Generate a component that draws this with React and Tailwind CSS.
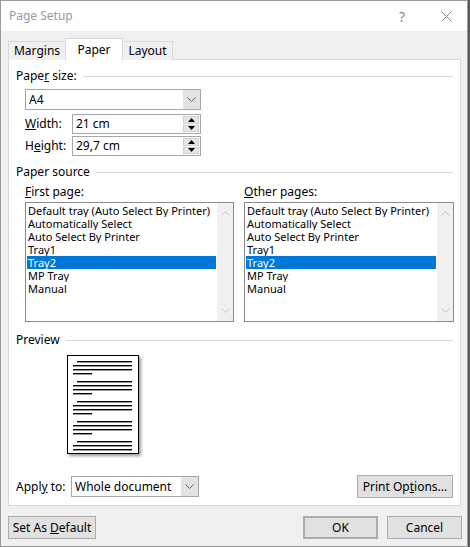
import { Fragment } from 'react';

const BANDEJAS = [
  'Default tray (Auto Select By Printer)',
  'Automatically Select',
  'Auto Select By Printer',
  'Tray1',
  'Tray2',
  'MP Tray',
  'Manual',
];

function Encabezado({ children, className = '' }) {
  return (
    <div className={`flex h-[16px] items-center leading-[16px] ${className}`}>
      <span>{children}</span>
      <div className="ml-[6px] h-px flex-1 bg-[#dcdcdc]" />
    </div>
  );
}

function Chevron({ up = false, color = '#606060' }) {
  return (
    <svg width="9" height="5" viewBox="0 0 9 5">
      <path d={up ? 'M0.5 4.5 L4.5 0.5 L8.5 4.5' : 'M0.5 0.5 L4.5 4.5 L8.5 0.5'} fill="none" stroke={color} strokeWidth="1" />
    </svg>
  );
}

function Combo({ valor, className = '' }) {
  return (
    <div className={`flex h-[21px] border border-[#a6a6a6] bg-white ${className}`}>
      <div className="flex-1 pl-[3px] leading-[19px]">{valor}</div>
      <div className="flex w-[17px] items-center justify-center bg-[#e3e3e3]">
        <Chevron />
      </div>
    </div>
  );
}

function Spin({ valor }) {
  return (
    <div className="flex h-[20px] w-[129px] border border-[#a6a6a6] bg-white">
      <div className="flex-1 pl-[3px] leading-[18px]">{valor}</div>
      <div className="flex w-[17px] flex-col gap-px py-px pr-px">
        <div className="flex flex-1 items-center justify-center border border-[#cfcfcf] bg-[#e6e6e6]">
          <svg width="7" height="4" viewBox="0 0 7 4"><path d="M3.5 0 L7 4 L0 4 Z" fill="#000" /></svg>
        </div>
        <div className="flex flex-1 items-center justify-center border border-[#cfcfcf] bg-[#e6e6e6]">
          <svg width="7" height="4" viewBox="0 0 7 4"><path d="M0 0 L7 0 L3.5 4 Z" fill="#000" /></svg>
        </div>
      </div>
    </div>
  );
}

function ListaBandejas({ className = '' }) {
  return (
    <div className={`flex h-[120px] border border-[#8a8a8a] bg-white ${className}`}>
      <div className="min-w-0 flex-1 overflow-hidden p-px">
        {BANDEJAS.map((b) => (
          <div
            key={b}
            className={`h-[13px] overflow-hidden whitespace-nowrap pl-px text-[11px] leading-[13px] ${b === 'Tray2' ? 'bg-[#0078d7] text-white' : ''}`}
          >
            {b}
          </div>
        ))}
      </div>
      <div className="flex w-[16px] shrink-0 flex-col items-center justify-between bg-[#f0f0f0] py-[8px]">
        <Chevron up color="#c4c4c4" />
        <Chevron color="#c4c4c4" />
      </div>
    </div>
  );
}

function Boton({ children, className = '' }) {
  return (
    <button className={`h-[23px] border border-[#adadad] bg-[#e1e1e1] text-center leading-[20px] ${className}`}>
      {children}
    </button>
  );
}

function PaginaPrevia() {
  const grupos = [6, 26, 46, 66];
  return (
    <div className="ml-[51px] mt-[7px] h-[99px] w-[72px] shadow-[2px_2px_3px_rgba(0,0,0,0.4)]">
      <svg width="72" height="99" viewBox="0 0 72 99">
        <rect x="0.5" y="0.5" width="71" height="98" fill="#fff" stroke="#000" />
        {grupos.map((y) => (
          <Fragment key={y}>
            <rect x="10" y={y} width="55" height="1.4" fill="#000" />
            <rect x="6" y={y + 4} width="59" height="1.4" fill="#000" />
            <rect x="6" y={y + 8} width="59" height="1.4" fill="#000" />
            <rect x="6" y={y + 12} width="19" height="1.4" fill="#000" />
          </Fragment>
        ))}
        <rect x="10" y="86" width="55" height="1.4" fill="#000" />
        <rect x="6" y="90" width="59" height="1.4" fill="#000" />
        <rect x="6" y="94" width="59" height="1.4" fill="#000" />
      </svg>
    </div>
  );
}

export default function App() {
  return (
    <div className="h-[547px] w-[470px] bg-[#5c5c5c] font-['Segoe_UI','Noto_Sans',sans-serif] text-[12px] text-black">
      <div className="flex h-[547px] w-[468px] flex-col border border-[#9a9a9a] bg-[#f0f0f0]">
        {/* barra de título */}
        <div className="flex h-[30px] shrink-0 items-center bg-white pl-[8px]">
          <span className="text-[12px] text-[#999]">Page Setup</span>
          <span className="ml-auto mr-[36px] text-[14px] text-[#8a8a8a]">?</span>
          <svg className="mr-[15px]" width="11" height="11" viewBox="0 0 11 11">
            <path d="M0.5 0.5 L10.5 10.5 M10.5 0.5 L0.5 10.5" stroke="#8a8a8a" strokeWidth="1" />
          </svg>
        </div>

        {/* pestañas */}
        <div className="relative z-10 mt-[7px] -mb-px flex h-[22px] items-end pl-[7px]">
          <div className="h-[19px] w-[58px] border border-b-0 border-[#d9d9d9] bg-[#f0f0f0] text-center leading-[17px]">Margins</div>
          <div className="-ml-px h-[22px] w-[58px] border border-b-0 border-[#d9d9d9] bg-white text-center leading-[21px]">Paper</div>
          <div className="-ml-px h-[19px] w-[51px] border border-b-0 border-[#d9d9d9] bg-[#f0f0f0] text-center leading-[17px]">Layout</div>
        </div>

        {/* panel */}
        <div className="ml-[7px] flex h-[447px] w-[453px] flex-col border border-[#d9d9d9] bg-white px-[7px]">
          <Encabezado className="mt-[8px]">Pape<u>r</u> size:</Encabezado>
          <Combo valor="A4" className="ml-[9px] mt-[5px] w-[176px]" />
          <div className="ml-[9px] mt-[4px] flex items-center">
            <span className="w-[47px]"><u>W</u>idth:</span>
            <Spin valor="21 cm" />
          </div>
          <div className="ml-[9px] mt-[2px] flex items-center">
            <span className="w-[47px]">H<u>e</u>ight:</span>
            <Spin valor="29,7 cm" />
          </div>

          <Encabezado className="mt-[8px]">Paper source</Encabezado>
          <div className="ml-[9px] mt-[4px] flex">
            <div className="flex flex-col">
              <div className="h-[16px] leading-[16px]"><u>F</u>irst page:</div>
              <ListaBandejas className="mt-[2px] w-[209px]" />
            </div>
            <div className="ml-[10px] flex flex-col">
              <div className="h-[16px] leading-[16px]"><u>O</u>ther pages:</div>
              <ListaBandejas className="mt-[2px] w-[210px]" />
            </div>
          </div>

          <Encabezado className="mt-[10px]">Preview</Encabezado>
          <PaginaPrevia />

          <div className="mt-[21px] flex items-center">
            <span className="w-[55px]">Appl<u>y</u> to:</span>
            <Combo valor="Whole document" className="w-[128px]" />
            <Boton className="ml-auto h-[22px] w-[96px]">Print Op<u>t</u>ions...</Boton>
          </div>
        </div>

        {/* botones inferiores */}
        <div className="mt-[10px] flex pl-[7px] pr-[5px]">
          <Boton className="w-[88px]">Set As <u>D</u>efault</Boton>
          <Boton className="ml-auto w-[75px] border-2 border-[#0078d7]">OK</Boton>
          <Boton className="ml-[9px] w-[75px]">Cancel</Boton>
        </div>
      </div>
    </div>
  );
}
